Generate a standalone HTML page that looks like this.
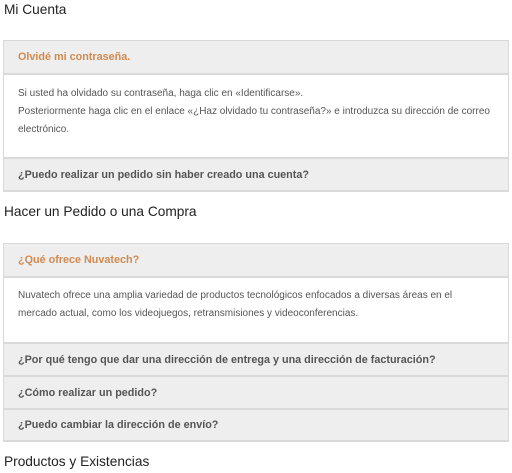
<!DOCTYPE html>
<html><head><meta charset="utf-8"><style>
*{margin:0;padding:0;box-sizing:border-box}
body{width:512px;height:473px;overflow:hidden;background:#fff;font-family:"Liberation Sans",sans-serif;position:relative}
h2{position:absolute;left:4px;font-weight:normal;font-size:13.7px;color:#222;}
.box{position:absolute;left:3px;width:506px;border:1px solid #d8d8d8;border-bottom:none}
.hd{background:#eee;border-bottom:2px solid #dadada;font-weight:bold;font-size:10.8px;color:#555;padding-left:14px;display:flex;align-items:center}
.hd.o{color:#d08a4f}
.bd{background:#fff;border-bottom:2px solid #dadada;font-size:10px;color:#555;padding:10px 4px 10px 14px;line-height:18px;white-space:nowrap}
</style></head><body>
<h2 style="top:2px">Mi Cuenta</h2>
<div class="box" style="top:40px">
<div class="hd o" style="height:34px">Olvidé mi contraseña.</div>
<div class="bd" style="height:84px">Si usted ha olvidado su contraseña, haga clic en «Identificarse».<br>Posteriormente haga clic en el enlace «¿Haz olvidado tu contraseña?» e introduzca su dirección de correo<br>electrónico.</div>
<div class="hd" style="height:33px">¿Puedo realizar un pedido sin haber creado una cuenta?</div>
</div>
<h2 style="top:204px">Hacer un Pedido o una Compra</h2>
<div class="box" style="top:243px">
<div class="hd o" style="height:34px">¿Qué ofrece Nuvatech?</div>
<div class="bd" style="height:66px;padding-top:9px">Nuvatech ofrece una amplia variedad de productos tecnológicos enfocados a diversas áreas en el<br>mercado actual, como los videojuegos, retransmisiones y videoconferencias.</div>
<div class="hd" style="height:33px">¿Por qué tengo que dar una dirección de entrega y una dirección de facturación?</div>
<div class="hd" style="height:33px">¿Cómo realizar un pedido?</div>
<div class="hd" style="height:32px">¿Puedo cambiar la dirección de envío?</div>
</div>
<h2 style="top:454px">Productos y Existencias</h2>
</body></html>
